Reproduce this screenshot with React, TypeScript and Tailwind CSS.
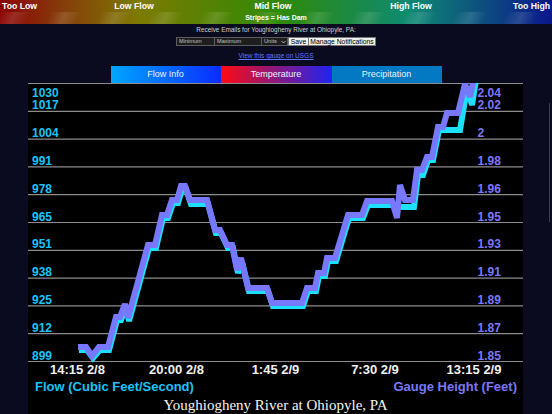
import React from "react";

const P: [number, number][] = [
  [78, 347], [86, 347], [92, 356], [99, 347], [108, 347], [116, 317], [120, 317], [125, 304], [128, 318],
  [148, 245], [155, 245], [162, 215], [167, 215], [172, 200], [177, 200], [181, 186], [185, 186], [190, 200],
  [207, 200], [215, 230], [220, 230], [227, 245], [232, 245], [237, 270], [241, 258], [248, 288], [267, 288],
  [272, 303], [302, 303], [307, 288], [315, 288], [318, 273], [324, 273], [327, 258], [335, 258], [348, 215],
  [362, 215], [367, 201], [392, 201], [397, 218], [400, 185], [405, 200], [413, 200], [417, 170], [422, 170],
  [427, 157], [432, 157], [438, 127], [443, 127], [447, 113], [458, 113], [465, 84], [470, 97], [474, 78],
];

const C: [number, number][] = [
  [78, 350], [86, 350], [92, 358], [99, 350], [108, 350], [116, 320], [120, 320], [125, 307], [128, 321],
  [148, 248], [155, 248], [162, 218], [167, 218], [172, 203], [177, 203], [181, 189], [185, 189], [190, 204],
  [207, 204], [215, 233], [220, 233], [227, 248], [232, 248], [237, 273], [241, 262], [248, 291], [267, 291],
  [272, 306], [302, 306], [307, 291], [315, 291], [318, 276], [324, 276], [327, 261], [335, 261], [348, 218],
  [362, 218], [367, 205], [395, 205], [400, 207], [413, 207], [417, 175], [422, 175], [427, 160], [432, 160],
  [438, 130], [459, 130], [466, 88], [471, 105], [475, 80],
];

const pts = (a: [number, number][], dx = 0) => a.map(([x, y]) => `${x + dx},${y}`).join(" ");

const grid = [83.5, 111.3, 139.1, 166.9, 194.7, 222.5, 250.3, 278.1, 305.9, 333.7, 361.5];
const left = ["1030", "1017", "1004", "991", "978", "965", "951", "938", "925", "912", "899"];
const right = ["2.04", "2.02", "2", "1.98", "1.96", "1.95", "1.93", "1.91", "1.89", "1.87", "1.85"];
const base = [96.5, 109.3, 137.1, 164.9, 192.7, 220.5, 248.3, 276.1, 303.9, 331.7, 359.5];
const xl: [string, number][] = [
  ["14:15 2/8", 77.5],
  ["20:00 2/8", 176.5],
  ["1:45 2/9", 275.5],
  ["7:30 2/9", 375],
  ["13:15 2/9", 474],
];

export default function App() {
  return (
    <div className="w-[552px] h-[414px] overflow-hidden bg-[#0a0b1f] flex flex-col font-['Liberation_Sans',Arial,sans-serif]">
      <div className="relative h-[24px] shrink-0 bg-[linear-gradient(90deg,#8c0303_0%,#84400a_12%,#7d7a02_25%,#2f8a06_50%,#0e8a72_74%,#0b168c_100%)] text-white font-bold">
        <div className="grid grid-cols-[64px_140px_138px_138px_1fr] h-[12px] text-[8.7px] leading-[12px]">
          <span className="pl-[2px]">Too Low</span>
          <span className="text-center">Low Flow</span>
          <span className="text-center">Mid Flow</span>
          <span className="text-center">High Flow</span>
          <span className="text-right pr-[2px]">Too High</span>
        </div>
        <div className="h-[12px] text-center text-[7px] leading-[12px] bg-[repeating-linear-gradient(115deg,rgba(255,255,255,0)_0px,rgba(255,255,255,0.13)_14px,rgba(255,255,255,0)_28px,rgba(255,255,255,0)_46px)]">
          Stripes = Has Dam
        </div>
      </div>

      <div className="flex flex-col items-center shrink-0">
        <p className="mt-[2px] text-[6.4px] leading-[8px] text-[#d0d0d0]">
          Receive Emails for Youghiogheny River at Ohiopyle, PA:
        </p>
        <div className="mt-[3px] flex h-[9px] text-[5.6px] leading-[7px]">
          <div className="w-[39px] h-[9px] bg-[#1e1e1e] border border-[#5c5c5c] text-[#c4c4c4] pl-[2px]">Minimum</div>
          <div className="w-[47px] h-[9px] bg-[#1e1e1e] border border-l-0 border-[#5c5c5c] text-[#c4c4c4] pl-[2px]">Maximum</div>
          <div className="w-[26px] h-[9px] bg-[#1e1e1e] border border-l-0 border-[#5c5c5c] text-[#c4c4c4] pl-[2px] flex items-center justify-between pr-[1px]">
            <span>Units</span>
            <svg width="5" height="4" viewBox="0 0 5 4">
              <path d="M0.5 1 L2.5 3 L4.5 1" stroke="#cfcfcf" strokeWidth="0.8" fill="none" />
            </svg>
          </div>
          <div className="w-[21px] h-[9px] bg-[#efefef] border border-[#767676] text-black text-[6.8px] leading-[7px] text-center">Save</div>
          <div className="w-[67px] h-[9px] bg-[#efefef] border border-l-0 border-[#767676] text-black text-[6.8px] leading-[7px] text-center">Manage Notifications</div>
        </div>
        <a className="mt-[6px] text-[6.5px] leading-[8px] text-[#5a78ff] underline">View this gauge on USGS</a>
        <div className="mt-[6px] flex h-[17px] w-[331px] text-[9px] leading-[17px] text-[#eef0ff]">
          <div className="w-[110px] text-center bg-[linear-gradient(90deg,#00a6ff,#0a2cff)]">Flow Info</div>
          <div className="w-[111px] text-center bg-[linear-gradient(90deg,#ff0a10,#8a1880_50%,#1f24f0)]">Temperature</div>
          <div className="w-[110px] text-center bg-[#0279c2]">Precipitation</div>
        </div>
      </div>

      <div className="flex flex-1">
        <div className="w-[28px] shrink-0" />
        <svg width="495" height="331" viewBox="28 83 495 331" className="shrink-0 block">
          <rect x="28" y="83" width="495" height="331" fill="#000" />
          {grid.map((y) => (
            <line key={y} x1="28" x2="523" y1={y} y2={y} stroke="#8c8c8c" strokeWidth="1.2" />
          ))}
          <polyline points={pts(C, 1)} fill="none" stroke="#1de0ff" strokeWidth="6" strokeLinejoin="miter" strokeMiterlimit="3" />
          <polyline points={pts(P)} fill="none" stroke="#7878ff" strokeWidth="6" strokeLinejoin="miter" strokeMiterlimit="3" />
          <g fontFamily="'Liberation Sans', Arial, sans-serif" fontWeight="bold" fontSize="12">
            {left.map((t, i) => (
              <text key={t} x="32" y={base[i]} fill="#1bc3f7">{t}</text>
            ))}
            {right.map((t, i) => (
              <text key={t} x="477.5" y={base[i]} fill="#7b78f7">{t}</text>
            ))}
          </g>
          <g fontFamily="'Liberation Sans', Arial, sans-serif" fontWeight="bold" fontSize="13">
            {xl.map(([t, x]) => (
              <text key={t} x={x} y="374" textAnchor="middle" fill="#f2f2f2">{t}</text>
            ))}
            <text x="35" y="390.5" fill="#1bc3f7">Flow (Cubic Feet/Second)</text>
            <text x="517" y="390.5" textAnchor="end" fill="#7b78f7">Gauge Height (Feet)</text>
          </g>
          <text x="275.5" y="410" textAnchor="middle" fontFamily="'Liberation Serif', 'Times New Roman', serif" fontSize="15" fill="#f4f4f4">
            Youghiogheny River at Ohiopyle, PA
          </text>
        </svg>
        <div className="flex-1">
          <div className="ml-[26px] mt-[20px] w-[1px] h-[119px] bg-[#3a3b4c]" />
        </div>
      </div>
    </div>
  );
}
